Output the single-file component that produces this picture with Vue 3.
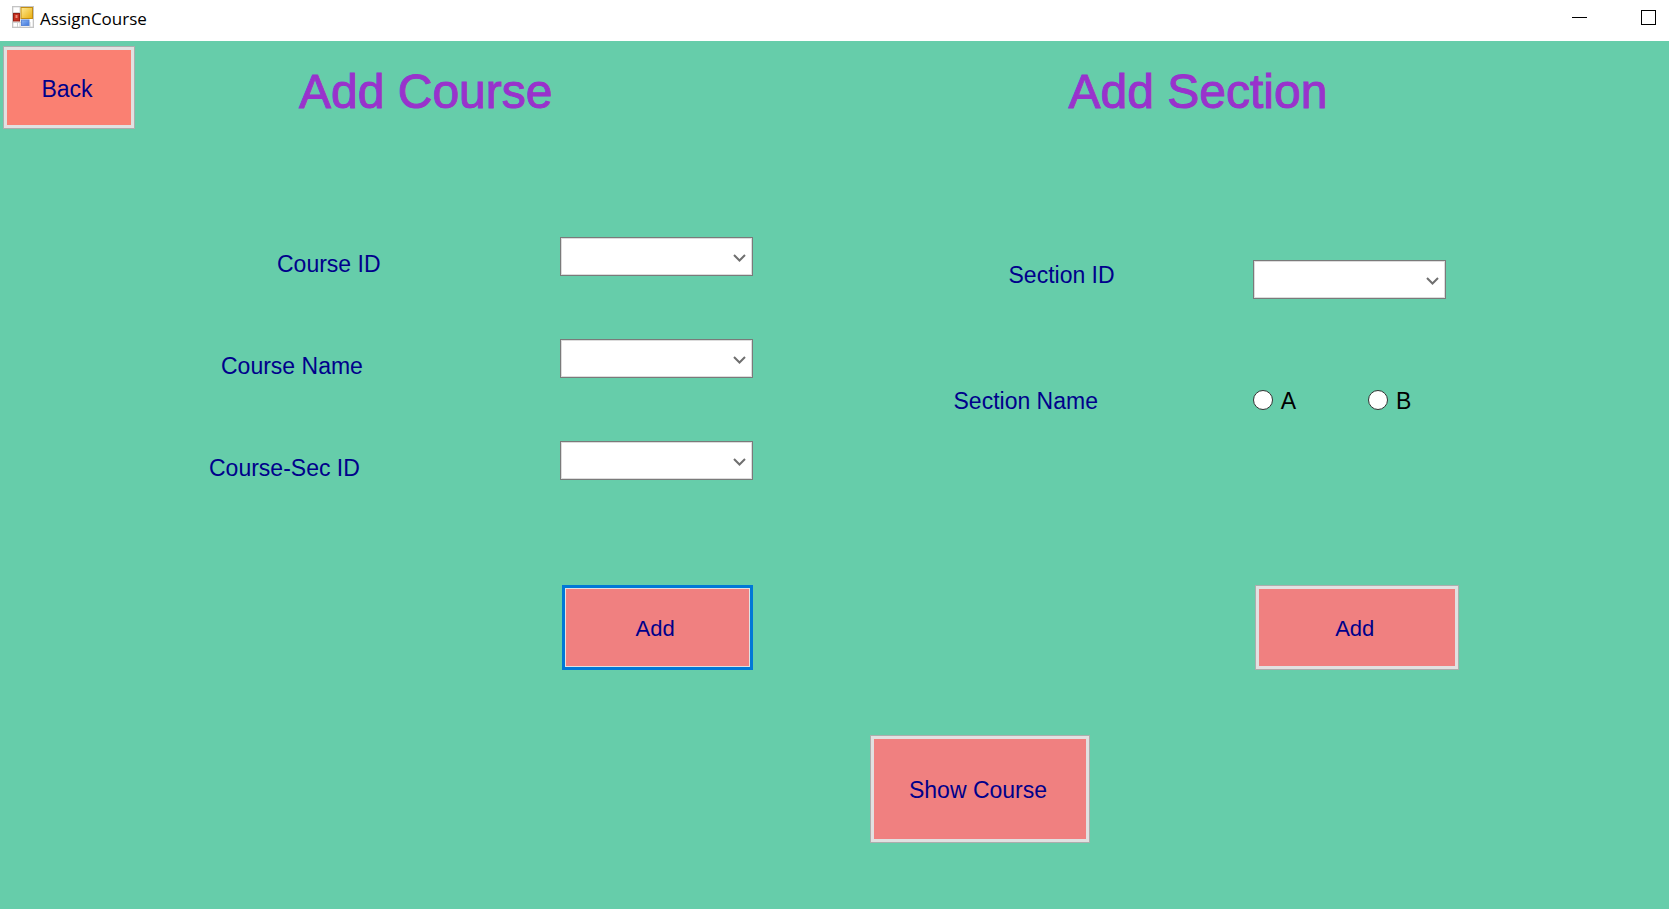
<script setup>
import { ref } from 'vue'

const courseFields = [
  { id: 'course-id', label: 'Course ID' },
  { id: 'course-name', label: 'Course Name' },
  { id: 'course-sec-id', label: 'Course-Sec ID' },
]
const sections = ['A', 'B']
const section = ref('')
</script>

<template>
  <div class="window">
    <header class="titlebar">
      <svg class="app-icon" width="22" height="22" viewBox="0 0 22 22" aria-hidden="true">
        <defs>
          <linearGradient id="gold" x1="0" y1="0" x2="1" y2="1">
            <stop offset="0" stop-color="#ffeb94" />
            <stop offset="1" stop-color="#e9ad0c" />
          </linearGradient>
          <linearGradient id="blue" x1="0" y1="0" x2="1" y2="1">
            <stop offset="0" stop-color="#8fb8f5" />
            <stop offset="1" stop-color="#3f76dc" />
          </linearGradient>
        </defs>
        <rect x="0.5" y="0.5" width="21" height="21" fill="#fff" stroke="#c4c4c4" stroke-width="1.6" />
        <path d="M1 6.5h7M1 16.5h8M5.500 16v5M18 16v5M8 1v20" stroke="#d2d2d2" fill="none" />
        <rect x="9" y="1.500" width="11.500" height="11" fill="url(#gold)" stroke="#c48d12" />
        <rect x="1.500" y="7.500" width="6" height="7.500" fill="#c5301f" stroke="#942015" />
        <rect x="3.500" y="9" width="2" height="3" fill="#ee8c7c" />
        <rect x="9.500" y="14" width="7.500" height="5.500" fill="url(#blue)" stroke="#5b87d8" />
      </svg>
      <span class="title">AssignCourse</span>
      <button class="caption" type="button" aria-label="Minimize">
        <svg width="15" height="15" viewBox="0 0 15 15"><path d="M0 7.500h15" stroke="#000" /></svg>
      </button>
      <button class="caption maximize" type="button" aria-label="Maximize">
        <svg width="15" height="15" viewBox="0 0 15 15"><rect x="0.5" y="0.5" width="14" height="14" fill="none" stroke="#000" /></svg>
      </button>
    </header>

    <main>
      <div class="panes">
        <form class="pane" @submit.prevent>
          <div class="pane-head">
            <button class="btn back" type="button">Back</button>
            <h1>Add Course</h1>
          </div>
          <div class="fields course-fields">
            <div v-for="f in courseFields" :key="f.id" class="row">
              <label :for="f.id" :class="f.id">{{ f.label }}</label>
              <div class="combo">
                <select :id="f.id"><option value=""></option></select>
                <svg width="13" height="8" viewBox="0 0 13 8" aria-hidden="true"><path d="M1 1l5.500 5.500L12 1" /></svg>
              </div>
            </div>
          </div>
          <div class="row actions">
            <button class="btn add focused" type="submit">Add</button>
          </div>
        </form>

        <form class="pane section-pane" @submit.prevent>
          <div class="pane-head">
            <h1>Add Section</h1>
          </div>
          <div class="fields section-fields">
            <div class="row">
              <label for="section-id" class="section-id">Section ID</label>
              <div class="combo">
                <select id="section-id"><option value=""></option></select>
                <svg width="13" height="8" viewBox="0 0 13 8" aria-hidden="true"><path d="M1 1l5.500 5.500L12 1" /></svg>
              </div>
            </div>
            <div class="row" role="radiogroup" aria-labelledby="section-name">
              <span id="section-name" class="section-name">Section Name</span>
              <div class="radios">
                <label v-for="s in sections" :key="s" class="radio">
                  <input v-model="section" type="radio" name="section" :value="s" />
                  <span>{{ s }}</span>
                </label>
              </div>
            </div>
          </div>
          <div class="row actions">
            <button class="btn add wide" type="submit">Add</button>
          </div>
        </form>
      </div>

      <div class="footer">
        <button class="btn show" type="button">Show Course</button>
      </div>
    </main>
  </div>
</template>

<style>
body {
  margin: 0;
  background: #66cdaa;
}
</style>

<style scoped>
.window {
  display: flex;
  flex-direction: column;
  min-height: 100vh;
  background: #66cdaa;
  color: #00008b;
  font-family: "Liberation Sans", Arial, sans-serif;
  font-size: 23px;
  line-height: 24px;
}

.titlebar {
  display: flex;
  align-items: flex-start;
  height: 41px;
  background: #fff;
  color: #000;
}
.app-icon {
  margin: 6px 6px 0 12px;
}
.title {
  flex: 1;
  padding-top: 7px;
  font-family: "Open Sans", "Noto Sans", sans-serif;
  font-size: 17px;
  line-height: 24px;
}
.caption {
  display: flex;
  align-items: center;
  height: 35px;
  padding: 0 27px;
  border: 0;
  background: none;
}
.caption.maximize {
  padding-right: 13px;
}

.panes {
  display: grid;
  grid-template-columns: 1fr 1fr;
}
.pane {
  display: flex;
  flex-direction: column;
  --cols: 560fr 275fr;
}
.section-pane {
  --cols: 418fr 416fr;
}
.pane-head {
  display: flex;
  align-items: center;
  height: 83px;
  padding: 5px 0 0 3px;
}
h1 {
  margin: 0 0 0 164px;
  padding-top: 8px;
  color: #9932cc;
  font-size: 48px;
  font-weight: 400;
  line-height: 56px;
  -webkit-text-stroke: 1px #9932cc;
}
.section-pane h1 {
  margin-left: 231px;
}

.fields {
  display: flex;
  flex-direction: column;
}
.course-fields {
  gap: 63px;
  padding-top: 108px;
}
.section-fields {
  gap: 81px;
  padding-top: 131px;
}
.row {
  display: grid;
  grid-template-columns: var(--cols);
  align-items: center;
  min-height: 39px;
}
.course-fields label {
  padding-top: 14px;
}
.course-id { padding-left: 277px; }
.course-name { padding-left: 221px; }
.course-sec-id { padding-left: 209px; }
.section-id {
  padding-bottom: 10px;
  padding-left: 174px;
}
.section-name {
  padding-top: 2px;
  padding-left: 119px;
}

.combo {
  position: relative;
  width: 193px;
  height: 39px;
}
.combo select {
  appearance: none;
  display: block;
  box-sizing: border-box;
  width: 100%;
  height: 100%;
  padding: 0 28px 0 6px;
  border: 1px solid #7a7a7a;
  border-radius: 0;
  background: #fff;
  box-shadow: inset 0 0 0 1px #dcdcdc;
  font: inherit;
}
.combo svg {
  position: absolute;
  top: 17px;
  right: 7px;
  fill: none;
  stroke: #6f6f6f;
  stroke-width: 2;
  pointer-events: none;
}

.radios {
  display: flex;
  gap: 72px;
}
.radio {
  display: flex;
  align-items: center;
  gap: 8px;
  color: #000;
}
.radio span {
  padding-top: 2px;
}
.radio input {
  appearance: none;
  box-sizing: border-box;
  width: 20px;
  height: 20px;
  margin: 0;
  border: 1px solid #333;
  border-radius: 50%;
  background: #fff;
}
.radio input:checked {
  background: radial-gradient(circle, #222 0 5px, #fff 6px);
}

.actions {
  margin-top: auto;
  padding-top: 105px;
}
.btn {
  box-sizing: border-box;
  padding: 2px 4px 0 0;
  border: 1px solid #adadad;
  border-radius: 0;
  background: #f08080;
  box-shadow: inset 0 0 0 3px #e1e1e1;
  color: #00008b;
  font: inherit;
}
.back {
  width: 132px;
  height: 83px;
  background: #fa8072;
}
.add {
  grid-column: 2;
  width: 191px;
  height: 85px;
  margin-left: 2px;
  font-size: 22px;
}
.add.wide {
  width: 204px;
}
.focused {
  border: 3px solid #0078d7;
  box-shadow: inset 0 0 0 1px #e1e1e1;
  outline: none;
}

.footer {
  display: grid;
  grid-template-columns: 870fr 799fr;
  padding: 65px 0;
}
.show {
  grid-column: 2;
  width: 220px;
  height: 108px;
}
</style>
